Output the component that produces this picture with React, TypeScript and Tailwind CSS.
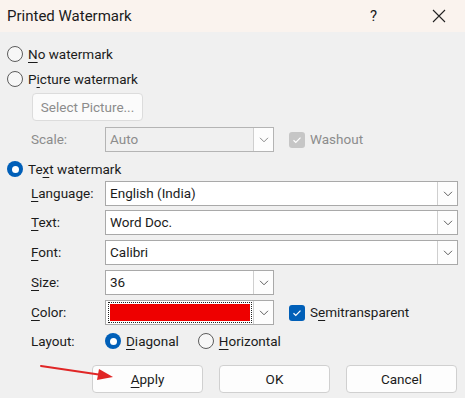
import React from 'react'

const font = { fontFamily: 'Roboto, "Noto Sans", sans-serif' }

function Chevron({ muted }: { muted?: boolean }) {
  return (
    <svg width="10" height="6" viewBox="0 0 10 6" className="block">
      <path d="M1 0.8 L5 4.8 L9 0.8" fill="none" stroke={muted ? '#8a8a8a' : '#606060'} strokeWidth="1" />
    </svg>
  )
}

function Radio({ checked, disabled }: { checked?: boolean; disabled?: boolean }) {
  if (checked) {
    return (
      <span className="flex h-4 w-4 shrink-0 items-center justify-center rounded-full bg-[#005fb8]">
        <span className="h-[7px] w-[7px] rounded-full bg-white" />
      </span>
    )
  }
  return (
    <span
      className={`h-4 w-4 shrink-0 rounded-full border bg-[#f7f7f7] ${
        disabled ? 'border-[#a0a0a0]' : 'border-[#5c5c5c]'
      }`}
    />
  )
}

function Check({ disabled }: { disabled?: boolean }) {
  return (
    <span
      className={`flex h-4 w-4 shrink-0 items-center justify-center rounded-[3px] ${
        disabled ? 'bg-[#c6c6c6]' : 'bg-[#005fb8]'
      }`}
    >
      <svg width="10" height="8" viewBox="0 0 10 8">
        <path d="M1.5 4.2 L3.8 6.4 L8.5 1.6" fill="none" stroke="white" strokeWidth="1.2" />
      </svg>
    </span>
  )
}

function Combo({
  value,
  width,
  disabled,
  children,
}: {
  value?: string
  width: string
  disabled?: boolean
  children?: React.ReactNode
}) {
  return (
    <div
      className={`flex h-[25px] ${width} border ${
        disabled ? 'border-[#b4b4b4] bg-[#f0f0f0]' : 'border-[#a9a9a9] bg-white'
      }`}
    >
      <div className={`flex min-w-0 flex-1 items-center pl-[4px] ${disabled ? 'text-[#8c8c8c]' : 'text-[#1b1b1b]'}`}>
        {children ?? value}
      </div>
      <div className="flex w-[20px] items-center justify-center border-l border-[#cfcfcf] bg-[#fdfdfd]">
        <Chevron muted={disabled} />
      </div>
    </div>
  )
}

function Key({ children }: { children: React.ReactNode }) {
  return <span className="underline decoration-1 underline-offset-[3px]">{children}</span>
}

function Label({ children }: { children: React.ReactNode }) {
  return <div className="w-[98px] shrink-0 pl-[24px]">{children}</div>
}

function Button({ children }: { children: React.ReactNode }) {
  return (
    <button className="flex h-[28px] w-[111px] items-center justify-center rounded-[4px] border border-[#d0d0d0] bg-[#fdfdfd] text-[#1b1b1b]">
      {children}
    </button>
  )
}

export default function App() {
  return (
    <div className="h-[398px] w-[465px] overflow-hidden bg-[#f0f0f0] text-[13.5px] text-[#1b1b1b]" style={font}>
      {/* Title bar */}
      <div className="flex h-[32px] items-center bg-[#faf3ee]">
        <div className="pl-[7px] text-[15px]">Printed Watermark</div>
        <div className="ml-auto pr-[48px] text-[15px]">?</div>
        <div className="flex w-[40px] items-center justify-center pr-[12px]">
          <svg width="14" height="14" viewBox="0 0 14 14">
            <path d="M1 1 L13 13 M13 1 L1 13" stroke="#222" strokeWidth="1.1" />
          </svg>
        </div>
      </div>

      <div className="flex flex-col pl-[7px]">
        <label className="mt-[12px] flex h-[20px] items-center gap-[5px]">
          <Radio />
          <span>
            <Key>N</Key>o watermark
          </span>
        </label>
        <label className="mt-[5px] flex h-[20px] items-center gap-[5px]">
          <Radio />
          <span>
            P<Key>i</Key>cture watermark
          </span>
        </label>

        <div className="mt-[4px] pl-[25px]">
          <button className="flex h-[28px] w-[111px] items-center justify-center rounded-[4px] border border-[#dcdcdc] bg-[#fbfbfb] text-[#8c8c8c]">
            Select Picture...
          </button>
        </div>

        <div className="mt-[6px] flex items-center text-[#8c8c8c]">
          <Label>Scale:</Label>
          <Combo value="Auto" width="w-[169px]" disabled />
          <div className="ml-[15px] flex items-center gap-[5px]">
            <Check disabled />
            <span>Washout</span>
          </div>
        </div>

        <label className="mt-[7px] flex h-[20px] items-center gap-[5px]">
          <Radio checked />
          <span>
            Te<Key>x</Key>t watermark
          </span>
        </label>

        <div className="mt-[2px] flex flex-col">
          <div className="flex items-center">
            <Label>
              <Key>L</Key>anguage:
            </Label>
            <Combo value="English (India)" width="w-[353px]" />
          </div>
          <div className="mt-[4px] flex items-center">
            <Label>
              <Key>T</Key>ext:
            </Label>
            <Combo value="Word Doc." width="w-[353px]" />
          </div>
          <div className="mt-[5px] flex items-center">
            <Label>
              <Key>F</Key>ont:
            </Label>
            <Combo value="Calibri" width="w-[353px]" />
          </div>
          <div className="mt-[5px] flex items-center">
            <Label>
              <Key>S</Key>ize:
            </Label>
            <Combo value="36" width="w-[169px]" />
          </div>
          <div className="mt-[5px] flex items-center">
            <Label>
              <Key>C</Key>olor:
            </Label>
            <Combo width="w-[169px]">
              <div className="-ml-[2px] mr-[1px] flex h-[21px] flex-1 items-center border border-dotted border-[#222] p-[1px]">
                <div className="h-full w-full bg-[#ee0000]" />
              </div>
            </Combo>
            <div className="ml-[15px] flex items-center gap-[5px]">
              <Check />
              <span>
                S<Key>e</Key>mitransparent
              </span>
            </div>
          </div>
        </div>

        <div className="mt-[6px] flex h-[20px] items-center">
          <Label>Layout:</Label>
          <label className="flex items-center gap-[5px]">
            <Radio checked />
            <span>
              <Key>D</Key>iagonal
            </span>
          </label>
          <label className="ml-[19px] flex items-center gap-[5px]">
            <Radio />
            <span>
              <Key>H</Key>orizontal
            </span>
          </label>
        </div>
      </div>

      {/* Buttons */}
      <div className="relative mt-[14px] flex gap-[16px] pl-[92px]">
        <svg className="absolute left-[38px] top-[-2px]" width="80" height="20" viewBox="0 0 80 20">
          <path d="M3 3 L64 12" stroke="#e02626" strokeWidth="2" strokeLinecap="round" />
          <path d="M75 14 L61 6 L59 17 Z" fill="#e02626" />
        </svg>
        <Button>
          <Key>A</Key>pply
        </Button>
        <Button>OK</Button>
        <Button>Cancel</Button>
      </div>
    </div>
  )
}
